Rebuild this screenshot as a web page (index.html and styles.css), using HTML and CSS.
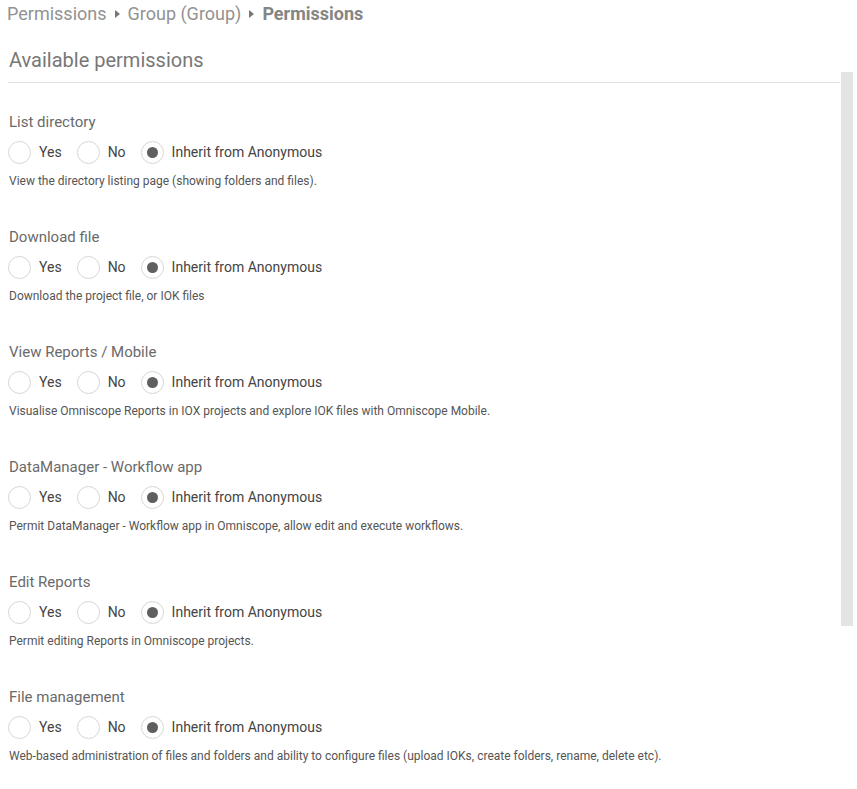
FILE: index.html
```html
<!DOCTYPE html>
<html>
<head>
<meta charset="utf-8">
<link rel="stylesheet" href="styles.css">
</head>
<body>
<nav class="crumbs">
  <span class="crumb">Permissions</span>
  <span class="caret"></span>
  <span class="crumb">Group (Group)</span>
  <span class="caret"></span>
  <span class="crumb current">Permissions</span>
</nav>
<h2 class="section-title">Available permissions</h2>
<div class="perm-list">
  <div class="perm">
    <div class="perm-name">List directory</div>
    <div class="options">
      <label class="opt"><span class="radio"></span>Yes</label>
      <label class="opt"><span class="radio"></span>No</label>
      <label class="opt"><span class="radio checked"></span>Inherit from Anonymous</label>
    </div>
    <div class="perm-desc">View the directory listing page (showing folders and files).</div>
  </div>
  <div class="perm">
    <div class="perm-name">Download file</div>
    <div class="options">
      <label class="opt"><span class="radio"></span>Yes</label>
      <label class="opt"><span class="radio"></span>No</label>
      <label class="opt"><span class="radio checked"></span>Inherit from Anonymous</label>
    </div>
    <div class="perm-desc">Download the project file, or IOK files</div>
  </div>
  <div class="perm">
    <div class="perm-name">View Reports / Mobile</div>
    <div class="options">
      <label class="opt"><span class="radio"></span>Yes</label>
      <label class="opt"><span class="radio"></span>No</label>
      <label class="opt"><span class="radio checked"></span>Inherit from Anonymous</label>
    </div>
    <div class="perm-desc">Visualise Omniscope Reports in IOX projects and explore IOK files with Omniscope Mobile.</div>
  </div>
  <div class="perm">
    <div class="perm-name">DataManager - Workflow app</div>
    <div class="options">
      <label class="opt"><span class="radio"></span>Yes</label>
      <label class="opt"><span class="radio"></span>No</label>
      <label class="opt"><span class="radio checked"></span>Inherit from Anonymous</label>
    </div>
    <div class="perm-desc">Permit DataManager - Workflow app in Omniscope, allow edit and execute workflows.</div>
  </div>
  <div class="perm">
    <div class="perm-name">Edit Reports</div>
    <div class="options">
      <label class="opt"><span class="radio"></span>Yes</label>
      <label class="opt"><span class="radio"></span>No</label>
      <label class="opt"><span class="radio checked"></span>Inherit from Anonymous</label>
    </div>
    <div class="perm-desc">Permit editing Reports in Omniscope projects.</div>
  </div>
  <div class="perm">
    <div class="perm-name">File management</div>
    <div class="options">
      <label class="opt"><span class="radio"></span>Yes</label>
      <label class="opt"><span class="radio"></span>No</label>
      <label class="opt"><span class="radio checked"></span>Inherit from Anonymous</label>
    </div>
    <div class="perm-desc">Web-based administration of files and folders and ability to configure files (upload IOKs, create folders, rename, delete etc).</div>
  </div>
</div>
<div class="scrollbar"></div>
</body>
</html>
```

FILE: styles.css
```css
html, body {
  margin: 0;
  padding: 0;
  background: #fff;
}
body {
  font-family: Roboto, "Liberation Sans", sans-serif;
  color: #555;
  position: relative;
  overflow: hidden;
  height: 789px;
}
.crumbs {
  display: flex;
  align-items: center;
  gap: 8px;
  padding: 0 0 0 7px;
  height: 26px;
  font-size: 18px;
  color: #929292;
}
.crumb.current {
  font-weight: bold;
  color: #858585;
}
.caret {
  width: 0;
  height: 0;
  border-top: 4.5px solid transparent;
  border-bottom: 4.5px solid transparent;
  border-left: 5px solid #777;
  margin-top: 1px;
}
.section-title {
  margin: 22px 17px 0 8px;
  padding: 0 0 10px 1px;
  font-size: 20px;
  font-weight: normal;
  color: #777;
  line-height: 24px;
  border-bottom: 1px solid #e2e2e2;
}
.perm-list {
  padding: 28px 0 0 9px;
}
.perm {
  height: 115px;
}
.perm-name {
  font-size: 15px;
  line-height: 22px;
  color: #6a6a6a;
}
.options {
  display: flex;
  align-items: center;
  height: 30px;
  margin: 4px 0 0 -1px;
}
.opt {
  display: flex;
  align-items: center;
  font-size: 14px;
  color: #444;
  margin-right: 15px;
}
.radio {
  box-sizing: border-box;
  width: 23px;
  height: 23px;
  border: 1px solid #d6d6d6;
  border-radius: 50%;
  margin-right: 8px;
  display: flex;
  align-items: center;
  justify-content: center;
}
.radio.checked::after {
  content: "";
  width: 11px;
  height: 11px;
  border-radius: 50%;
  background: #5f5f5f;
}
.perm-desc {
  margin-top: 6px;
  font-size: 12px;
  line-height: 16px;
  color: #555;
}
.scrollbar {
  position: absolute;
  left: 841px;
  top: 72px;
  width: 12px;
  height: 554px;
  background: #e4e4e4;
}
```
